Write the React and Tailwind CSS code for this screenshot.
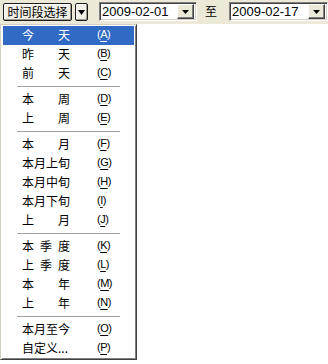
const groups = [
  [['今天', 'A'], ['昨天', 'B'], ['前天', 'C']],
  [['本周', 'D'], ['上周', 'E']],
  [['本月', 'F'], ['本月上旬', 'G'], ['本月中旬', 'H'], ['本月下旬', 'I'], ['上月', 'J']],
  [['本季度', 'K'], ['上季度', 'L'], ['本年', 'M'], ['上年', 'N']],
  [['本月至今', 'O'], ['自定义...', 'P']],
];

const raised =
  'border border-t-[#ffffff] border-l-[#ffffff] border-r-[#404040] border-b-[#404040] shadow-[inset_-1px_-1px_#808080]';

const Triangle = () => (
  <svg width="7" height="4" viewBox="0 0 7 4">
    <path d="M0 0h7L3.5 4z" fill="#000" />
  </svg>
);

const DateBox = ({ value, className }) => (
  <div
    className={`flex items-center h-[19px] bg-white border border-t-[#808080] border-l-[#808080] border-r-[#ffffff] border-b-[#ffffff] shadow-[inset_1px_1px_#404040,inset_-1px_-1px_#d4d0c8] ${className}`}
  >
    <span className="flex-1 pl-[2px] text-[13px] leading-none font-['Liberation_Sans',Arial,sans-serif] text-black">
      {value}
    </span>
    <div className={`flex items-center justify-center w-[17px] h-[15px] mr-[2px] bg-[#ece9d8] ${raised}`}>
      <Triangle />
    </div>
  </div>
);

const Label = ({ text }) => {
  if (text.includes('...')) return <span className="w-12 whitespace-nowrap">{text}</span>;
  return (
    <span className="flex justify-between w-12">
      {text.split('').map((ch, i) => (
        <span key={i}>{ch}</span>
      ))}
    </span>
  );
};

const Item = ({ label, accel, active }) => (
  <div
    className={`flex items-center h-[19px] pl-[19px] pb-[2px] ${active ? 'bg-[#316ac5] text-white' : 'text-black'}`}
  >
    <Label text={label} />
    <span className="ml-[27px] text-[11px] tracking-[-0.5px] font-['Liberation_Sans',Arial,sans-serif]">
      (<span className="underline underline-offset-[3px]">{accel}</span>)
    </span>
  </div>
);

export default function App() {
  return (
    <div className="w-[328px] h-[364px] bg-white font-['Noto_Sans_CJK_SC','Noto_Sans',sans-serif] text-[12px] leading-none overflow-hidden">
      <div className="flex items-start h-[24px] bg-[#ece9d8] pt-[2px]">
        <button
          className="ml-[3px] mt-px h-[18px] w-[69px] flex items-center justify-center bg-[#f1efe6] rounded-[2px] border border-[#1c1c1c] shadow-[inset_-1px_-1px_#9d9a8c,inset_1px_1px_#ffffff] text-[12px] text-black"
        >
          时间段选择
        </button>
        <button
          className="ml-[3px] mt-px h-[18px] w-[13px] flex items-center justify-center bg-[#f1efe6] rounded-[2px] border border-[#1c1c1c] shadow-[inset_-1px_-1px_#9d9a8c,inset_1px_1px_#ffffff]"
        >
          <svg width="7" height="5" viewBox="0 0 7 5">
            <path d="M0 0h7L3.5 5z" fill="#000" />
          </svg>
        </button>
        <DateBox value="2009-02-01" className="ml-[11px] w-[98px]" />
        <span className="ml-[8px] mt-[3px] w-[11px] text-[12px] text-black">至</span>
        <DateBox value="2009-02-17" className="ml-[13px] w-[99px]" />
      </div>
      <div className="w-[137px] bg-white border border-t-[#d4d0c8] border-l-[#d4d0c8] border-r-[#404040] border-b-[#404040] shadow-[inset_1px_1px_#ffffff,inset_-1px_-1px_#808080] px-[2px] py-px">
        {groups.map((g, gi) => (
          <div key={gi}>
            {gi > 0 && (
              <div className="flex items-center h-[7px]">
                <div className="flex-1 mx-[14px] h-px bg-[#a0a0a0]" />
              </div>
            )}
            {g.map(([label, accel]) => (
              <Item key={accel} label={label} accel={accel} active={accel === 'A'} />
            ))}
          </div>
        ))}
      </div>
    </div>
  );
}
